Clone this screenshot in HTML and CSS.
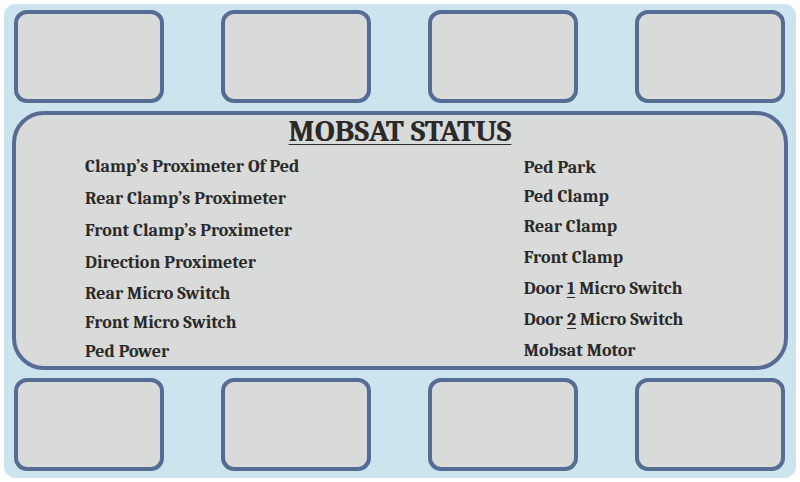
FILE: index.html
```html
<!DOCTYPE html>
<html lang="en">
<head>
<meta charset="utf-8">
<meta name="viewport" content="width=device-width, initial-scale=1">
<title>Mobsat Status</title>
<link rel="stylesheet" href="styles.css">
</head>
<body>
<main class="board">
  <div class="tiles">
    <div class="tile"></div>
    <div class="tile"></div>
    <div class="tile"></div>
    <div class="tile"></div>
  </div>
  <section class="panel">
    <h1 class="title">MOBSAT STATUS</h1>
    <div class="columns">
      <ul class="list list-left">
        <li class="loose">Clamp’s Proximeter Of Ped</li>
        <li class="loose">Rear Clamp’s Proximeter</li>
        <li class="loose">Front Clamp’s Proximeter</li>
        <li class="loose">Direction Proximeter</li>
        <li class="tight">Rear Micro Switch</li>
        <li class="tight">Front Micro Switch</li>
        <li class="tight">Ped Power</li>
      </ul>
      <ul class="list list-right">
        <li class="tight">Ped Park</li>
        <li class="tight">Ped Clamp</li>
        <li>Rear Clamp</li>
        <li>Front Clamp</li>
        <li>Door <u>1</u> Micro Switch</li>
        <li>Door <u>2</u> Micro Switch</li>
        <li>Mobsat Motor</li>
      </ul>
    </div>
  </section>
  <div class="tiles">
    <div class="tile"></div>
    <div class="tile"></div>
    <div class="tile"></div>
    <div class="tile"></div>
  </div>
</main>
</body>
</html>
```
FILE: styles.css
```css
* {
  box-sizing: border-box;
}

body {
  margin: 0;
  padding: 4px;
  background: #fff;
  color: #2b2a29;
  font-family: Cambria, Caladea, "Noto Serif", "Liberation Serif", serif;
  font-weight: bold;
}

.board {
  display: flex;
  flex-direction: column;
  gap: 8px;
  padding: 6px 8px 7px;
  border-radius: 12px;
  background: #cce4ed;
}

.tiles {
  display: grid;
  grid-template-columns: repeat(4, 1fr);
  column-gap: 57px;
  padding: 0 3px 0 2px;
}

.tile {
  height: 93px;
  border: 4px solid #566c94;
  border-radius: 13px;
  background: #d9dbda;
}

.panel {
  border: 4px solid #566c94;
  border-radius: 32px;
  background: #d9dbda;
}

.title {
  margin: 0 0 4px;
  font-size: 31px;
  line-height: 32px;
  text-align: center;
  text-decoration: underline;
  text-decoration-thickness: 1px;
  text-underline-offset: 3px;
}

.columns {
  display: grid;
  grid-template-columns: 57% 1fr;
}

.list {
  margin: 0;
  padding: 0;
  list-style: none;
  font-size: 18px;
  line-height: 31px;
}

.list-left {
  padding-left: 69px;
}

.list-right {
  padding: 2px 0 0 70px;
}

.list .loose {
  line-height: 32px;
}

.list .tight {
  line-height: 29px;
}

u {
  text-decoration-thickness: 1px;
  text-underline-offset: 3px;
}
```
